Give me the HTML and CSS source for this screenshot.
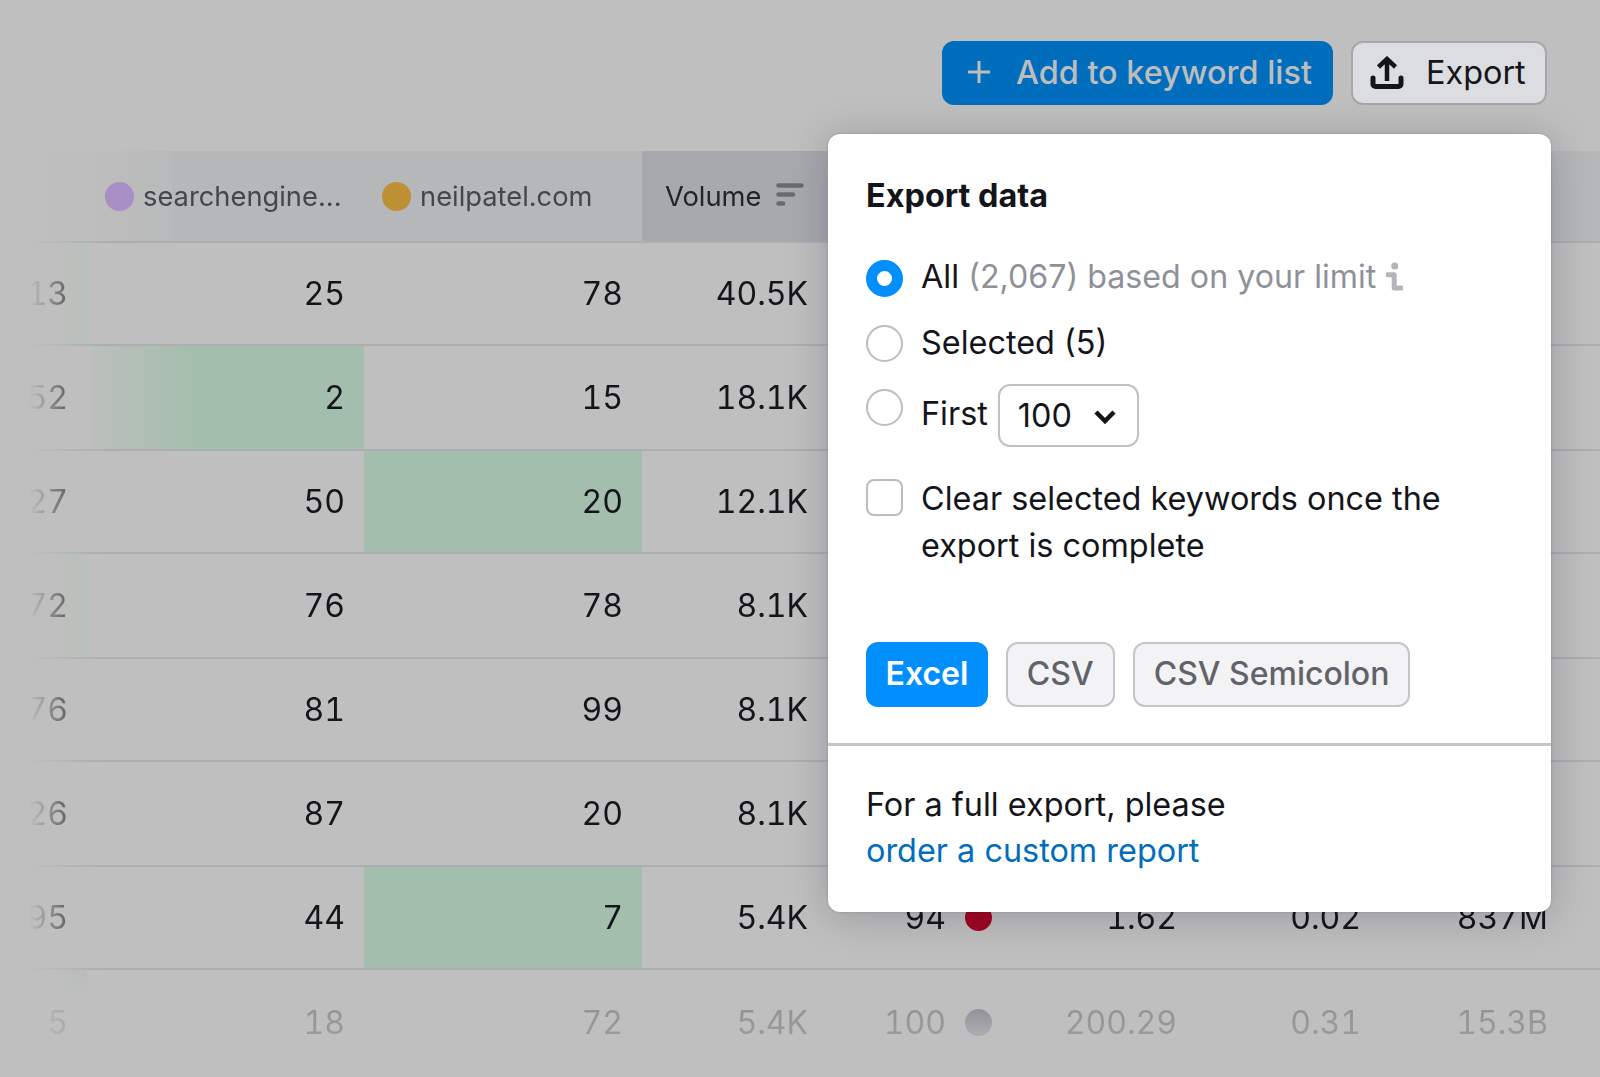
FILE: index.html
```html
<!DOCTYPE html>
<html>

<head>
    <meta charset="UTF-8">
    <title>Export data</title>
    <link rel="stylesheet" href="styles.css">
</head>

<body>
    <div class="page">
        <div class="toolbar">
            <button class="btn-add">
                <svg class="ico-plus" viewBox="0 0 24 24"><path d="M12 1v22M1 12h22" /></svg>
                Add to keyword list
            </button>
            <button class="btn-export">
                <svg class="ico-upload" viewBox="0 0 34 33"><path class="up" d="M17 25V4M8.500 11 17 3l8.500 8" /><path class="tray" d="M3 22v6a2.500 2.500 0 0 0 2.500 2.500h23A2.500 2.500 0 0 0 31 28v-6" /></svg>
                Export
            </button>
        </div>

        <div class="grid">
            <div class="row head">
                <div></div>
                <div class="th"><span class="dot purple"></span>searchengine...</div>
                <div class="th"><span class="dot gold"></span>neilpatel.com</div>
                <div class="th sorted">Volume
                    <svg class="ico-sort" viewBox="0 0 28 23"><path d="M2.500 2.500h23M2.500 11.500H17M2.500 20.500H7" /></svg>
                </div>
                <div></div><div></div><div></div><div></div><div></div>
            </div>

            <div class="row">
                <div class="td fade-green">13</div><div class="td">25</div><div class="td">78</div><div class="td">40.5K</div>
                <div></div><div></div><div></div><div></div><div></div>
            </div>
            <div class="row">
                <div class="td">52</div><div class="td green-fade">2</div><div class="td">15</div><div class="td">18.1K</div>
                <div></div><div></div><div></div><div></div><div></div>
            </div>
            <div class="row">
                <div class="td">27</div><div class="td">50</div><div class="td green">20</div><div class="td">12.1K</div>
                <div></div><div></div><div></div><div></div><div></div>
            </div>
            <div class="row">
                <div class="td fade-green">72</div><div class="td">76</div><div class="td">78</div><div class="td">8.1K</div>
                <div></div><div></div><div></div><div></div><div></div>
            </div>
            <div class="row">
                <div class="td">76</div><div class="td">81</div><div class="td">99</div><div class="td">8.1K</div>
                <div></div><div></div><div></div><div></div><div></div>
            </div>
            <div class="row">
                <div class="td">26</div><div class="td">87</div><div class="td">20</div><div class="td">8.1K</div>
                <div></div><div></div><div></div><div></div><div></div>
            </div>
            <div class="row">
                <div class="td">95</div><div class="td">44</div><div class="td green">7</div><div class="td">5.4K</div>
                <div class="td kd">94<span class="kd-dot red"></span></div><div class="td">1.62</div><div class="td">0.02</div><div class="td">837M</div><div></div>
            </div>
            <div class="row last">
                <div class="td smudge">5</div><div class="td">18</div><div class="td">72</div><div class="td">5.4K</div>
                <div class="td kd">100<span class="kd-dot grey"></span></div><div class="td">200.29</div><div class="td">0.31</div><div class="td">15.3B</div><div></div>
            </div>
        </div>

        <div class="panel">
            <div class="panel-body">
                <h2>Export data</h2>

                <div class="opt opt-all">
                    <span class="radio on"></span>
                    <span>All <span class="muted">(2,067) based on your limit</span></span>
                    <svg class="ico-info" viewBox="0 0 17 30"><circle cx="8.700" cy="4" r="3.500" /><path d="M1.500 12.800h6.700V26H15.500" /></svg>
                </div>
                <div class="opt opt-sel">
                    <span class="radio"></span>
                    <span>Selected (5)</span>
                </div>
                <div class="opt first">
                    <span class="radio"></span>
                    <span>First</span>
                    <div class="select">100
                        <svg class="ico-chev" viewBox="0 0 24 16"><path d="M3 3l9 9 9-9" /></svg>
                    </div>
                </div>
                <div class="opt check">
                    <span class="box"></span>
                    <span>Clear selected keywords once the<br>export is complete</span>
                </div>

                <div class="formats">
                    <button class="fmt active">Excel</button>
                    <button class="fmt">CSV</button>
                    <button class="fmt">CSV Semicolon</button>
                </div>
            </div>
            <div class="panel-foot">
                For a full export, please<br>
                <a href="#">order a custom report</a>
            </div>
        </div>
    </div>
</body>

</html>
```

FILE: styles.css
```css
html, body {
    margin: 0;
    height: 100%;
    overflow: hidden;
    background: #bfbfbf;
}
.page {
    position: relative;
    height: 1077px;
    font-family: "Inter", "Liberation Sans", sans-serif;
    font-size: 32.4px;
    color: #14151a;
}

/* top buttons */
.toolbar {
    display: flex;
    justify-content: flex-end;
    gap: 18px;
    padding: 41px 53px 0 0;
}
button {
    font-family: inherit;
    font-size: 32.4px;
    box-sizing: border-box;
    display: flex;
    align-items: center;
    height: 64px;
    border-radius: 12px;
    cursor: pointer;
}
.btn-add {
    width: 391px;
    padding: 0 0 2px 25px;
    gap: 25px;
    background: #006dbd;
    border: none;
    color: #bdbdbd;
    font-weight: 500;
}
.btn-export {
    width: 196px;
    padding: 0 0 2px 17px;
    gap: 22px;
    background: #dcdde0;
    border: 2px solid #a6a7ac;
    color: #14151a;
    font-weight: 400;
}
.ico-plus {
    width: 24px;
    height: 24px;
    fill: none;
    stroke: #bdbdbd;
    stroke-width: 3;
}
.ico-upload {
    width: 34px;
    height: 33px;
    fill: none;
    stroke: #14151a;
}
.ico-upload .up { stroke-width: 4.500; }
.ico-upload .tray {
    stroke-width: 5;
    stroke-linecap: round;
}

/* table behind the popup */
.grid {
    margin-top: 46px;
    font-size: 32px;
    font-variant-numeric: tabular-nums;
    -webkit-mask-image: linear-gradient(90deg, transparent 30px, #000 100px);
    mask-image: linear-gradient(90deg, transparent 30px, #000 100px);
}
.row {
    display: grid;
    grid-template-columns: 87px 277px 278px 185px 185px 184px 184px 187px 33px;
    height: 103px;
    box-sizing: border-box;
    border-bottom: 2px solid #adadb4;
}
.row:nth-child(odd) { height: 105px; }
.row.last {
    border-bottom: none;
    -webkit-mask-image: linear-gradient(rgba(0, 0, 0, .3), rgba(0, 0, 0, .16));
    mask-image: linear-gradient(rgba(0, 0, 0, .3), rgba(0, 0, 0, .16));
}
.row.head {
    height: 92px;
    background: linear-gradient(90deg, transparent 37px, #bdbdbd 100px, #b9babb 172px, #b6b7b9 172px);
    color: #45464d;
    font-size: 27.3px;
    font-variant-numeric: normal;
}
.th {
    display: flex;
    align-items: center;
    gap: 9px;
    padding-left: 18px;
}
.th.sorted {
    background: #a8a9af;
    color: #23242a;
    padding-left: 23px;
    gap: 15px;
}
.dot {
    width: 29px;
    height: 29px;
    border-radius: 50%;
}
.purple { background: #a88fc6; }
.gold { background: #bd9033; }
.ico-sort {
    width: 28px;
    height: 23px;
    margin-top: -4px;
    fill: none;
    stroke: #6a6b72;
    stroke-width: 4.600;
    stroke-linecap: round;
}
.td {
    display: flex;
    align-items: center;
    justify-content: flex-end;
    padding-right: 19px;
}
.green { background: #a4bead; }
.green-fade { background: linear-gradient(90deg, #bdbfbc, #a4bead 110px); }
.fade-green { background: linear-gradient(90deg, transparent 50px, #b6c3ba 87px); }
.smudge { background: linear-gradient(#a0bba9, transparent) no-repeat right top / 22px 25px; }
.kd {
    gap: 19px;
    padding-right: 20px;
}
.kd-dot {
    width: 27px;
    height: 27px;
    border-radius: 50%;
}
.red { background: #a10523; }
.grey { background: linear-gradient(#0d0a3a, #6a6a78); }

/* popup */
.panel {
    position: absolute;
    left: 828px;
    top: 134px;
    width: 723px;
    height: 778px;
    background: #fff;
    border-radius: 12px;
    box-shadow: 0 4px 40px rgba(20, 20, 40, .22), 0 0 2px rgba(20, 20, 40, .25);
    display: flex;
    flex-direction: column;
}
.panel-body {
    height: 612px;
    box-sizing: border-box;
    padding: 41px 38px 0;
    border-bottom: 3px solid #c4c5c9;
}
h2 {
    margin: 0 0 37px;
    font-size: 32.4px;
    line-height: 42px;
    font-weight: 700;
}
.opt {
    display: flex;
    align-items: center;
    gap: 18px;
    line-height: 46px;
    height: 46px;
}
.opt-all { margin-bottom: 20px; }
.opt-all .radio { margin-top: 2px; }
.opt-sel { margin-bottom: 18px; }
.muted {
    color: #8f9199;
    font-size: 32.2px;
}
.radio {
    box-sizing: border-box;
    width: 37px;
    height: 37px;
    border: 2px solid #bcbdc2;
    border-radius: 50%;
    flex: none;
}
.radio.on {
    border: 11px solid #008ffd;
}
.ico-info {
    width: 17px;
    height: 30px;
    margin-left: -8px;
    fill: #b4b5ba;
    stroke: none;
}
.ico-info path {
    fill: none;
    stroke: #b4b5ba;
    stroke-width: 5;
    stroke-linejoin: round;
    stroke-linecap: round;
}
.opt.first {
    height: 63px;
    margin-bottom: 28px;
    align-items: flex-start;
}
.opt.first .radio { margin-top: 5px; }
.opt.first > span:nth-child(2) { padding-top: 7px; }
.select {
    display: flex;
    align-items: center;
    gap: 21px;
    box-sizing: border-box;
    width: 141px;
    height: 63px;
    margin-left: -8px;
    padding-left: 18px;
    border: 2px solid #c0c1c6;
    border-radius: 12px;
}
.ico-chev {
    width: 24px;
    height: 16px;
    margin-top: 3px;
    fill: none;
    stroke: #14151a;
    stroke-width: 4.500;
}
.opt.check {
    height: auto;
    line-height: 47px;
    align-items: flex-start;
}
.box {
    box-sizing: border-box;
    width: 37px;
    height: 37px;
    margin-top: 4px;
    border: 2px solid #bcbdc2;
    border-radius: 8px;
    flex: none;
}
.formats {
    display: flex;
    gap: 18px;
    margin-top: 73px;
}
.fmt {
    font-size: 32px;
    height: 65px;
    padding: 0 19px 2px;
    background: #f3f3f5;
    border: 2px solid #c4c5c9;
    color: #62636a;
    font-weight: 500;
}
.fmt.active {
    padding: 0 17.500px 2px;
    background: #008ffd;
    border-color: #008ffd;
    color: #fff;
    font-weight: 600;
}
.panel-foot {
    padding: 36px 38px 0;
    line-height: 46px;
}
a {
    color: #006dbd;
    text-decoration: none;
}
```
